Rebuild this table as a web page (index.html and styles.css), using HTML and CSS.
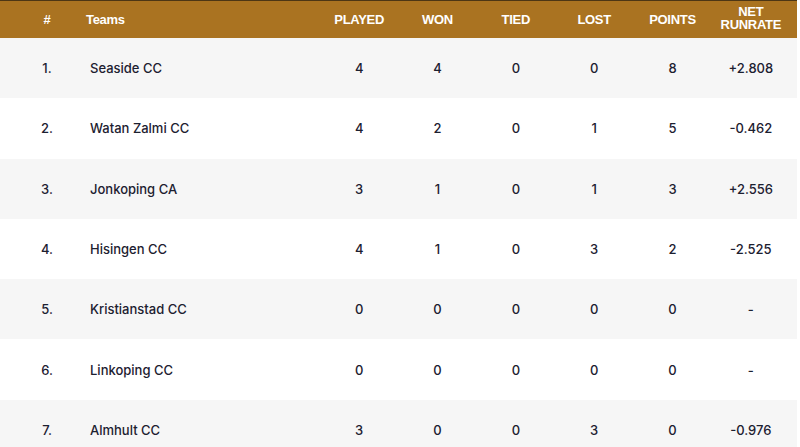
FILE: index.html
```html
<!DOCTYPE html>
<html lang="en">
<head>
<meta charset="utf-8">
<title>Points Table</title>
<link rel="stylesheet" href="styles.css">
</head>
<body>
<div class="table">
  <div class="row head">
    <div class="cell pos">#</div>
    <div class="cell team">Teams</div>
    <div class="cell">PLAYED</div>
    <div class="cell">WON</div>
    <div class="cell">TIED</div>
    <div class="cell">LOST</div>
    <div class="cell">POINTS</div>
    <div class="cell nrr">NET<br>RUNRATE</div>
  </div>
  <div class="row alt">
    <div class="cell pos">1.</div><div class="cell team">Seaside CC</div>
    <div class="cell">4</div><div class="cell">4</div><div class="cell">0</div><div class="cell">0</div><div class="cell">8</div><div class="cell">+2.808</div>
  </div>
  <div class="row">
    <div class="cell pos">2.</div><div class="cell team">Watan Zalmi CC</div>
    <div class="cell">4</div><div class="cell">2</div><div class="cell">0</div><div class="cell">1</div><div class="cell">5</div><div class="cell">-0.462</div>
  </div>
  <div class="row alt">
    <div class="cell pos">3.</div><div class="cell team">Jonkoping CA</div>
    <div class="cell">3</div><div class="cell">1</div><div class="cell">0</div><div class="cell">1</div><div class="cell">3</div><div class="cell">+2.556</div>
  </div>
  <div class="row">
    <div class="cell pos">4.</div><div class="cell team">Hisingen CC</div>
    <div class="cell">4</div><div class="cell">1</div><div class="cell">0</div><div class="cell">3</div><div class="cell">2</div><div class="cell">-2.525</div>
  </div>
  <div class="row alt">
    <div class="cell pos">5.</div><div class="cell team">Kristianstad CC</div>
    <div class="cell">0</div><div class="cell">0</div><div class="cell">0</div><div class="cell">0</div><div class="cell">0</div><div class="cell">-</div>
  </div>
  <div class="row">
    <div class="cell pos">6.</div><div class="cell team">Linkoping CC</div>
    <div class="cell">0</div><div class="cell">0</div><div class="cell">0</div><div class="cell">0</div><div class="cell">0</div><div class="cell">-</div>
  </div>
  <div class="row alt">
    <div class="cell pos">7.</div><div class="cell team">Almhult CC</div>
    <div class="cell">3</div><div class="cell">0</div><div class="cell">0</div><div class="cell">3</div><div class="cell">0</div><div class="cell">-0.976</div>
  </div>
</div>
</body>
</html>
```
FILE: styles.css
```css
html, body {
  margin: 0;
  padding: 0;
  background: #ffffff;
  overflow: hidden;
}
.table {
  width: 797px;
  font-family: Inter, "Liberation Sans", sans-serif;
}
.row {
  display: grid;
  grid-template-columns: 54px 246px repeat(6, 1fr);
  padding: 0 7px 0 20px;
  height: 60.3px;
  align-items: center;
  background: #ffffff;
  color: #1c2030;
  font-size: 13px;
  font-weight: 500;
}
.row.alt {
  background: #f6f6f6;
}
.row.head {
  height: 37px;
  border-top: 1px solid #4d3614;
  background: #aa7321;
  color: #ffffff;
  font-family: "Liberation Sans", Arial, sans-serif;
  font-weight: 700;
  font-size: 13px;
  letter-spacing: -0.3px;
}
.cell {
  text-align: center;
}
.cell.team {
  text-align: left;
  padding-left: 16px;
}
.head .cell.team {
  padding-left: 12px;
}
.cell.nrr {
  line-height: 13px;
  margin-top: -3px;
}
```
